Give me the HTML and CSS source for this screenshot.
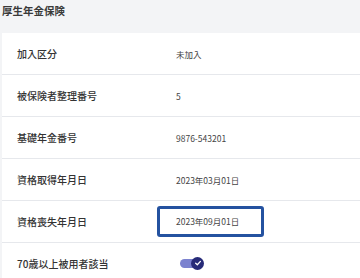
FILE: index.html
```html
<!DOCTYPE html>
<html lang="ja">
<head>
    <meta charset="UTF-8">
    <meta name="viewport" content="width=device-width, initial-scale=1.0">
    <title>厚生年金保険</title>
    <link rel="stylesheet" href="styles.css">
</head>
<body>
    <h2 class="section-title">厚生年金保険</h2>

    <div class="card">
        <div class="row">
            <div class="label">加入区分</div>
            <div class="value">未加入</div>
        </div>
        <div class="row">
            <div class="label">被保険者整理番号</div>
            <div class="value">5</div>
        </div>
        <div class="row">
            <div class="label">基礎年金番号</div>
            <div class="value">9876-543201</div>
        </div>
        <div class="row">
            <div class="label">資格取得年月日</div>
            <div class="value">2023年03月01日</div>
        </div>
        <div class="row">
            <div class="label">資格喪失年月日</div>
            <div class="value">
                <div class="field-edit">2023年09月01日</div>
            </div>
        </div>
        <div class="row">
            <div class="label">70歳以上被用者該当</div>
            <div class="value">
                <span class="toggle">
                    <span class="toggle-knob">
                        <svg width="8" height="8" viewBox="0 0 12 12">
                            <path d="M2.5 6.3 L5 8.6 L9.6 3.6" fill="none" stroke="#fff" stroke-width="1.9" stroke-linecap="round" stroke-linejoin="round"/>
                        </svg>
                    </span>
                </span>
            </div>
        </div>
    </div>
</body>
</html>
```

FILE: styles.css
```css
body {
    margin: 0;
    padding: 0;
    background: #f3f4f6;
    font-family: "Noto Sans CJK JP", "Noto Sans", sans-serif;
    color: #333;
}
.section-title {
    margin: 0;
    padding: 3px 2px 0;
    height: 30px;
    font-size: 10.5px;
    font-weight: 700;
    color: #3a3a3a;
}
.card {
    margin-left: 2px;
    background: #fff;
}
.row {
    display: grid;
    grid-template-columns: 155px 1fr;
    align-items: center;
    height: 41px;
    border-bottom: 1px solid #e6e8ec;
}
.row:last-child {
    border-bottom: none;
}
.label {
    padding-left: 15px;
    font-size: 10px;
    font-weight: 500;
    color: #333;
}
.value {
    padding-left: 19px;
    font-size: 8.5px;
    color: #444;
}
.field-edit {
    margin-left: -19px;
    width: 85px;
    height: 25px;
    line-height: 25px;
    padding-left: 16px;
    border: 3px solid #2452a0;
    border-radius: 3px;
}
.toggle {
    display: inline-flex;
    align-items: center;
    position: relative;
    margin-left: 4px;
    width: 20px;
    height: 9px;
    border-radius: 5px;
    background: #7b82cf;
}
.toggle-knob {
    position: absolute;
    right: -4px;
    top: -2px;
    width: 13px;
    height: 13px;
    border-radius: 50%;
    background: #272b78;
    display: flex;
    align-items: center;
    justify-content: center;
}
```
